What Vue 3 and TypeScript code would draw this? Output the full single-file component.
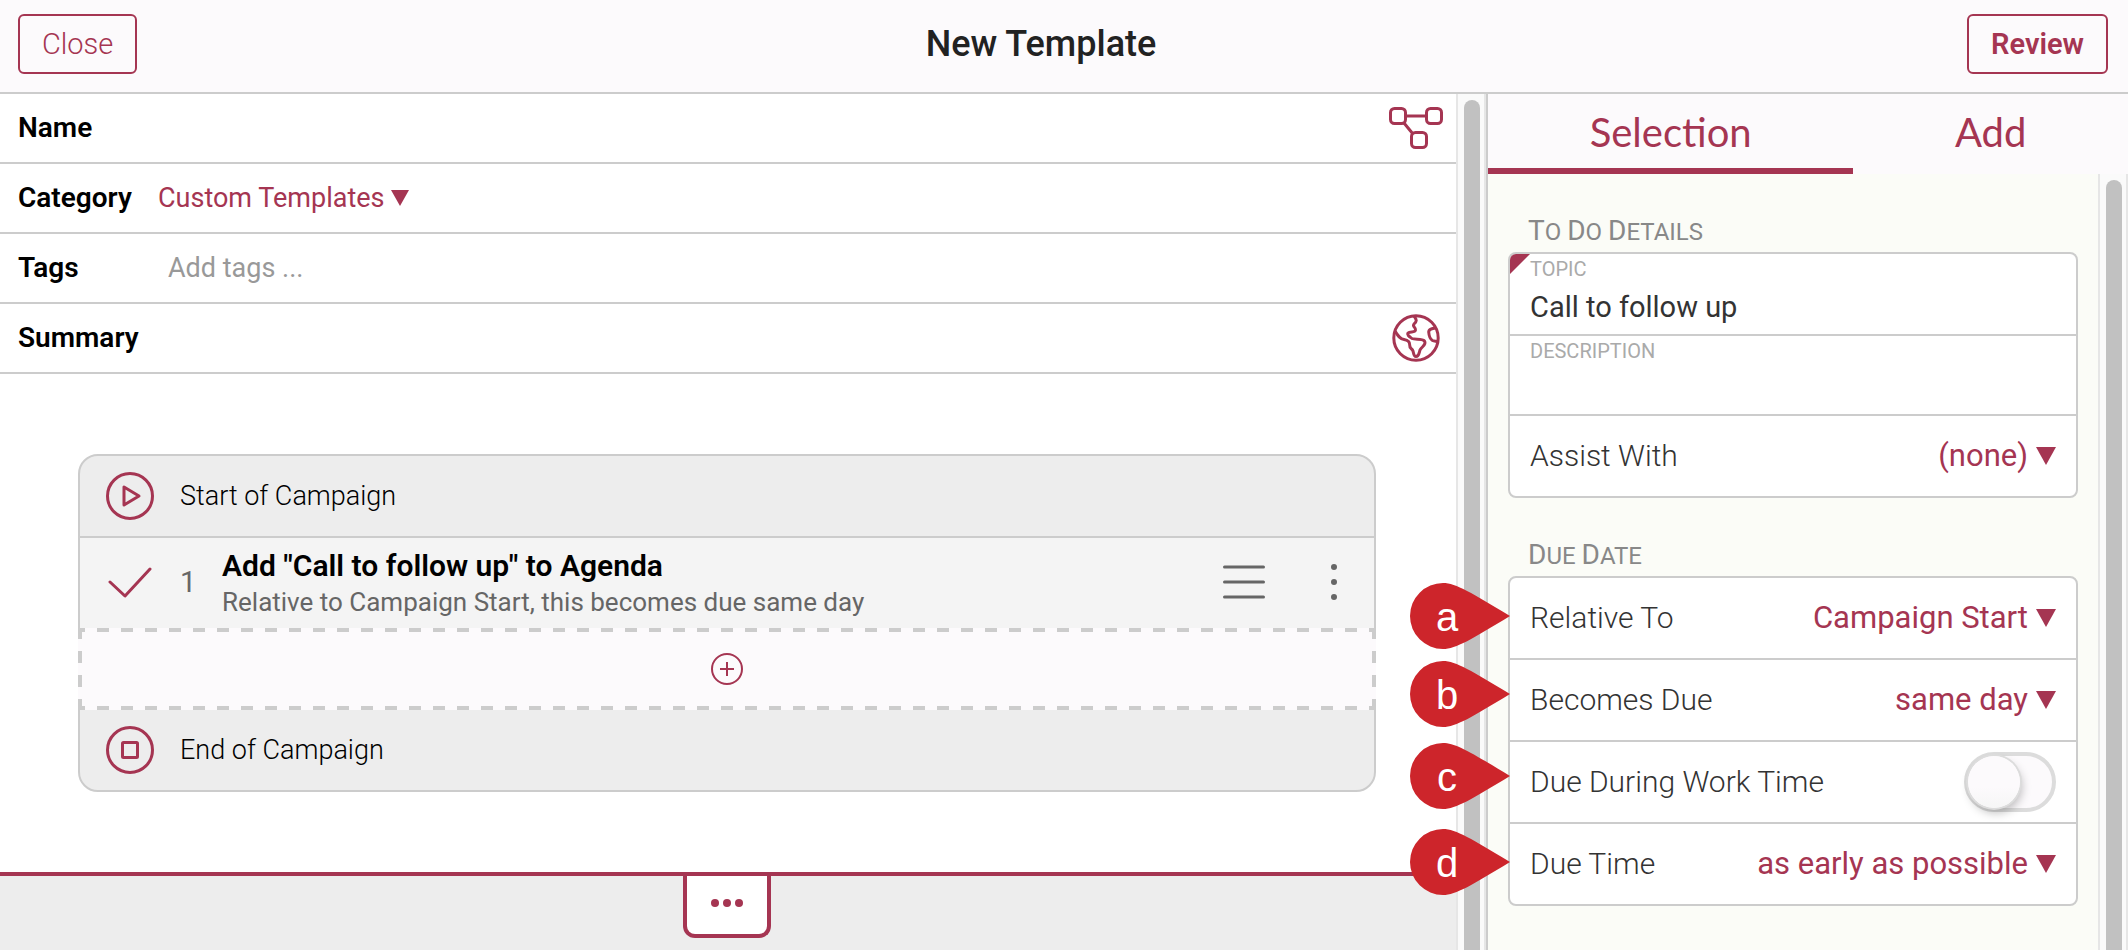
<script setup lang="ts">
import { ref } from 'vue'

interface DueRow {
  id: string
  label: string
  pin: string
  pinTop: number
  value?: string
}

const activeTab = ref('Selection')
const tabs: string[] = ['Selection', 'Add']
const name = ref('')
const tags = ref('')
const summary = ref('')
const topic = ref('Call to follow up')
const description = ref('')
const workTime = ref(false)

const dueRows: DueRow[] = [
  { id: 'relative-to', label: 'Relative To', pin: 'a', pinTop: 5, value: 'Campaign Start' },
  { id: 'becomes-due', label: 'Becomes Due', pin: 'b', pinTop: 1, value: 'same day' },
  { id: 'work-time', label: 'Due During Work Time', pin: 'c', pinTop: 1 },
  { id: 'due-time', label: 'Due Time', pin: 'd', pinTop: 5, value: 'as early as possible' },
]
</script>

<template>
  <div class="app">
    <header class="topbar">
      <button type="button" class="btn">Close</button>
      <h1>New Template</h1>
      <button type="button" class="btn strong">Review</button>
    </header>

    <div class="body">
      <main class="editor">
        <div class="field">
          <label for="name">Name</label>
          <input id="name" v-model="name" type="text" />
          <button type="button" class="icon-btn" aria-label="Show flow">
            <svg width="54" height="42" viewBox="0 0 54 42" fill="none" stroke="currentColor" stroke-width="3">
              <rect x="1.5" y="1.5" width="15" height="15" rx="4" />
              <rect x="37.5" y="1.5" width="15" height="15" rx="4" />
              <rect x="22.5" y="25.5" width="15" height="15" rx="4" />
              <path d="M17 9h20M15 16l9 11" />
            </svg>
          </button>
        </div>
        <div class="field">
          <label for="category">Category</label>
          <select id="category"><option>Custom Templates</option></select>
          <svg class="caret" width="18" height="16" viewBox="0 0 18 16"><path d="M0 0h18L9 16z" fill="currentColor" /></svg>
        </div>
        <div class="field">
          <label for="tags">Tags</label>
          <input id="tags" v-model="tags" type="text" placeholder="Add tags ..." />
        </div>
        <div class="field">
          <label for="summary">Summary</label>
          <input id="summary" v-model="summary" type="text" />
          <button type="button" class="icon-btn" aria-label="Language">
            <svg width="48" height="48" viewBox="0 0 48 48" fill="none" stroke="currentColor" stroke-width="3" stroke-linejoin="round">
              <circle cx="24" cy="24" r="22.2" />
              <path d="M22 2C25 6 25 7 22 10C20 13 24 13 23.500 16C23 19 18 17 16 19C14.500 21 18 23 20 24.500C23 26 30 24 32.500 27C35 31 29 33 28 36C27 39 27 42.500 24 42.500C21 42.500 22 38 20.500 36C19 34 17.500 34 17.700 31C18 27 15 26 12 25.500C8 25 6 22 3 17" />
              <path d="M43.500 14C40 14.500 36.700 15 36.700 18C37 22 38 25 40.500 26.500C42 27.300 44 27 46 27.500" />
            </svg>
          </button>
        </div>

        <section class="campaign">
          <div class="edge">
            <svg width="48" height="48" viewBox="0 0 48 48" fill="none" stroke="currentColor" stroke-width="3" stroke-linejoin="round">
              <circle cx="24" cy="24" r="22.5" /><path d="M18 15v18l15-9z" />
            </svg>
            <span>Start of Campaign</span>
          </div>
          <div class="step">
            <svg class="check" width="48" height="32" viewBox="0 0 48 32" fill="none" stroke="currentColor" stroke-width="3" stroke-linecap="round" stroke-linejoin="round">
              <path d="M4 16l15 14L44 3" />
            </svg>
            <span class="num">1</span>
            <div class="step-text">
              <strong>Add "Call to follow up" to Agenda</strong>
              <span>Relative to Campaign Start, this becomes due same day</span>
            </div>
            <button type="button" class="grey-btn" aria-label="Reorder">
              <svg width="42" height="34" viewBox="0 0 42 34" stroke="currentColor" stroke-width="3" stroke-linecap="round">
                <path d="M1.500 2h39M1.500 17h39M1.500 32h39" />
              </svg>
            </button>
            <button type="button" class="grey-btn" aria-label="More">
              <svg width="6" height="36" viewBox="0 0 6 36" fill="currentColor">
                <circle cx="3" cy="3" r="3" /><circle cx="3" cy="18" r="3" /><circle cx="3" cy="33" r="3" />
              </svg>
            </button>
          </div>
          <button type="button" class="drop" aria-label="Add step">
            <svg width="32" height="32" viewBox="0 0 32 32" fill="none" stroke="currentColor" stroke-width="2">
              <circle cx="16" cy="16" r="15" /><path d="M9 16h14M16 9v14" />
            </svg>
          </button>
          <div class="edge">
            <svg width="48" height="48" viewBox="0 0 48 48" fill="none" stroke="currentColor" stroke-width="3" stroke-linejoin="round">
              <circle cx="24" cy="24" r="22.5" /><rect x="16.500" y="16.500" width="15" height="15" rx="1" />
            </svg>
            <span>End of Campaign</span>
          </div>
        </section>

        <footer class="drawer">
          <button type="button" class="handle" aria-label="Expand">
            <svg width="32" height="8" viewBox="0 0 32 8" fill="currentColor">
              <circle cx="4" cy="4" r="4" /><circle cx="16" cy="4" r="4" /><circle cx="28" cy="4" r="4" />
            </svg>
          </button>
        </footer>
      </main>

      <div class="track"><div class="thumb"></div></div>

      <aside class="panel">
        <nav class="tabs">
          <button v-for="t in tabs" :key="t" type="button" :class="{ active: t === activeTab }" @click="activeTab = t">{{ t }}</button>
        </nav>
        <div class="panel-body">
          <div class="panel-main">
            <h2><span>To</span> <span>Do</span> <span>Details</span></h2>
            <div class="card">
              <div class="stack topic">
                <label for="topic">TOPIC</label>
                <input id="topic" v-model="topic" type="text" />
              </div>
              <div class="stack description">
                <label for="description">DESCRIPTION</label>
                <input id="description" v-model="description" type="text" />
              </div>
              <div class="row">
                <label for="assist">Assist With</label>
                <select id="assist"><option>(none)</option></select>
                <svg class="caret" width="20" height="18" viewBox="0 0 20 18"><path d="M0 0h20L10 18z" fill="currentColor" /></svg>
              </div>
            </div>

            <h2><span>Due</span> <span>Date</span></h2>
            <div class="card">
              <div v-for="r in dueRows" :key="r.id" class="row">
                <label :for="r.id">{{ r.label }}</label>
                <template v-if="r.value">
                  <select :id="r.id"><option>{{ r.value }}</option></select>
                  <svg class="caret" width="20" height="18" viewBox="0 0 20 18"><path d="M0 0h20L10 18z" fill="currentColor" /></svg>
                </template>
                <input v-else :id="r.id" v-model="workTime" type="checkbox" role="switch" class="switch" />
                <div class="pin" :style="{ top: r.pinTop + 'px' }">
                  <svg width="100" height="66" viewBox="0 0 100 66"><path d="M100 33C62 10 46 0 33 0A33 33 0 0 0 33 66C46 66 62 56 100 33z" fill="#cd252b" /></svg>
                  <span>{{ r.pin }}</span>
                </div>
              </div>
            </div>
          </div>
          <div class="track"><div class="thumb"></div></div>
        </div>
      </aside>
    </div>
  </div>
</template>

<style>
body {
  margin: 0;
}
</style>

<style scoped>
.app {
  --accent: #a53552;
  --line: #ccc;
  display: flex;
  flex-direction: column;
  height: 100vh;
  overflow: hidden;
  background: #fff;
  color: #000;
  font-family: Roboto, "Liberation Sans", sans-serif;
  font-size: 27px;
}
.app * {
  box-sizing: border-box;
}
button,
input,
select {
  font: inherit;
  color: inherit;
  margin: 0;
  padding: 0;
  border: 0;
  background: none;
  border-radius: 0;
  outline: none;
}
svg {
  display: block;
  flex: none;
}
select {
  appearance: none;
  color: var(--accent);
}
.caret {
  color: var(--accent);
}
.topbar {
  display: grid;
  grid-template-columns: 1fr auto 1fr;
  align-items: center;
  flex: none;
  height: 94px;
  padding: 0 20px 4px 18px;
  border-bottom: 2px solid var(--line);
  background: #fcfafc;
}
.topbar h1 {
  margin: 0;
  padding-right: 44px;
  font-size: 36px;
  font-weight: 500;
  color: #222;
}
.btn {
  height: 60px;
  padding: 0 22px;
  justify-self: start;
  border: 2px solid var(--accent);
  border-radius: 6px;
  color: var(--accent);
  font-size: 29px;
  font-weight: 300;
}
.btn.strong {
  justify-self: end;
  font-weight: 600;
}
.body {
  display: flex;
  flex: 1;
  min-height: 0;
}
.editor {
  display: flex;
  flex-direction: column;
  flex: 1;
  min-width: 0;
}
.field {
  display: flex;
  align-items: center;
  flex: none;
  height: 70px;
  padding: 0 13px 0 18px;
  border-bottom: 2px solid var(--line);
}
.field label {
  width: 140px;
  padding-bottom: 2px;
  font-size: 28px;
  font-weight: 600;
}
.field input {
  flex: 1;
  min-width: 0;
  padding-left: 10px;
}
.field input::placeholder {
  color: #999;
  opacity: 1;
}
.field .caret {
  margin-left: 5px;
}
.icon-btn {
  display: flex;
  justify-content: center;
  width: 54px;
  color: var(--accent);
}
.campaign {
  flex: none;
  margin: 80px 80px 80px 78px;
  border: 2px solid var(--line);
  border-radius: 20px;
  background: #ededed;
}
.edge {
  display: flex;
  align-items: center;
  gap: 26px;
  height: 80px;
  padding-left: 26px;
  font-weight: 300;
}
.edge svg,
.check {
  color: var(--accent);
}
.step {
  display: flex;
  align-items: center;
  height: 92px;
  padding: 0 37px 2px 26px;
  border-top: 2px solid var(--line);
  background: #f4f4f4;
}
.num {
  width: 42px;
  margin-left: 26px;
  font-size: 29px;
  color: #666;
}
.step-text {
  flex: 1;
  display: flex;
  flex-direction: column;
  padding-top: 4px;
  line-height: 36px;
}
.step-text strong {
  font-size: 30px;
  font-weight: 600;
}
.step-text span {
  font-size: 26px;
  color: #666;
}
.grey-btn {
  margin-left: 66px;
  color: #666;
}
.drop {
  --dash: var(--line) 0 12px, transparent 12px 24px;
  display: flex;
  align-items: center;
  justify-content: center;
  width: calc(100% + 4px);
  height: 82px;
  margin: 0 -2px;
  color: var(--accent);
  background:
    linear-gradient(90deg, var(--dash)) -5px 0 / 24px 4px repeat-x,
    linear-gradient(90deg, var(--dash)) -5px 100% / 24px 4px repeat-x,
    linear-gradient(var(--dash)) 0 -1px / 4px 24px repeat-y,
    linear-gradient(var(--dash)) 100% -1px / 4px 24px repeat-y,
    #fcfafc;
}
.drawer {
  display: flex;
  justify-content: center;
  align-items: flex-start;
  flex: 1;
  padding-right: 2px;
  border-top: 4px solid var(--accent);
  background: #ededed;
}
.handle {
  display: flex;
  align-items: center;
  justify-content: center;
  width: 88px;
  height: 62px;
  padding-bottom: 5px;
  border: 4px solid var(--accent);
  border-top: 0;
  border-radius: 0 0 12px 12px;
  background: #fff;
  color: var(--accent);
}
.track {
  flex: none;
  width: 30px;
  padding: 6px 0 0 6px;
  border: solid #e6e6e6;
  border-width: 0 2px;
  background: #fafafa;
  overflow: hidden;
}
.thumb {
  width: 16px;
  height: 100%;
  border-radius: 8px 8px 0 0;
  background: #c1c1c1;
}
.panel {
  display: flex;
  flex-direction: column;
  flex: none;
  width: 642px;
  border-left: 2px solid var(--line);
  background: #fbfcf7;
}
.tabs {
  display: flex;
  flex: none;
  height: 80px;
  background: #fcfafc;
}
.tabs button {
  flex: 1 1 auto;
  padding-top: 2px;
  border-bottom: 6px solid transparent;
  color: var(--accent);
  font-family: Lato, "Liberation Sans", sans-serif;
  font-size: 40px;
}
.tabs button.active {
  border-bottom-color: var(--accent);
}
.panel-body {
  display: flex;
  flex: 1;
  min-height: 0;
}
.panel-main {
  flex: 1;
  min-width: 0;
  padding: 38px 20px 0;
}
h2 {
  margin: 0;
  padding-left: 20px;
  height: 40px;
  line-height: 38px;
  font-size: 24px;
  font-weight: 400;
  color: #888;
  text-transform: uppercase;
}
h2 span {
  display: inline-block;
}
h2 span::first-letter {
  font-size: 28px;
}
.card {
  margin-bottom: 38px;
  border: 2px solid var(--line);
  border-radius: 8px;
  background: #fff;
}
.card > * + * {
  border-top: 2px solid var(--line);
}
.stack {
  display: flex;
  flex-direction: column;
  height: 80px;
  padding: 2px 20px 0;
}
.stack label {
  line-height: 26px;
  font-size: 20px;
  color: #aaa;
}
.stack input {
  height: 50px;
  font-size: 29px;
  color: #333;
}
.topic {
  position: relative;
}
.topic::before {
  content: "";
  position: absolute;
  top: 0;
  left: 0;
  width: 20px;
  height: 20px;
  border-top-left-radius: 6px;
  background: var(--accent);
  clip-path: polygon(0 0, 100% 0, 0 100%);
}
.row {
  position: relative;
  display: flex;
  align-items: center;
  height: 82px;
  padding: 0 20px;
  font-size: 30px;
  color: #333;
}
.row:first-child {
  height: 80px;
}
.row label {
  padding-bottom: 2px;
  font-weight: 300;
}
.row select {
  flex: 1;
  min-width: 0;
  margin-right: 8px;
  padding-bottom: 2px;
  font-size: 31px;
  text-align-last: right;
}
.switch {
  appearance: none;
  width: 92px;
  height: 60px;
  margin-left: auto;
  border: 4px solid #dcdcdc;
  border-radius: 30px;
  background: #fcfafc;
}
.switch::before {
  content: "";
  display: block;
  width: 52px;
  height: 52px;
  border-radius: 50%;
  background: linear-gradient(#fcfafc 60%, #f6f6f6);
  box-shadow: 0 0 0 2px #dcdcdc, 2px 5px 10px rgba(0, 0, 0, 0.25);
}
.switch:checked::before {
  margin-left: 32px;
}
.pin {
  position: absolute;
  right: 100%;
  width: 100px;
  height: 66px;
}
.pin span {
  position: absolute;
  inset: 0 26px 0 0;
  line-height: 68px;
  text-align: center;
  font-family: "Liberation Sans", sans-serif;
  font-size: 40px;
  color: #fff;
}
</style>
